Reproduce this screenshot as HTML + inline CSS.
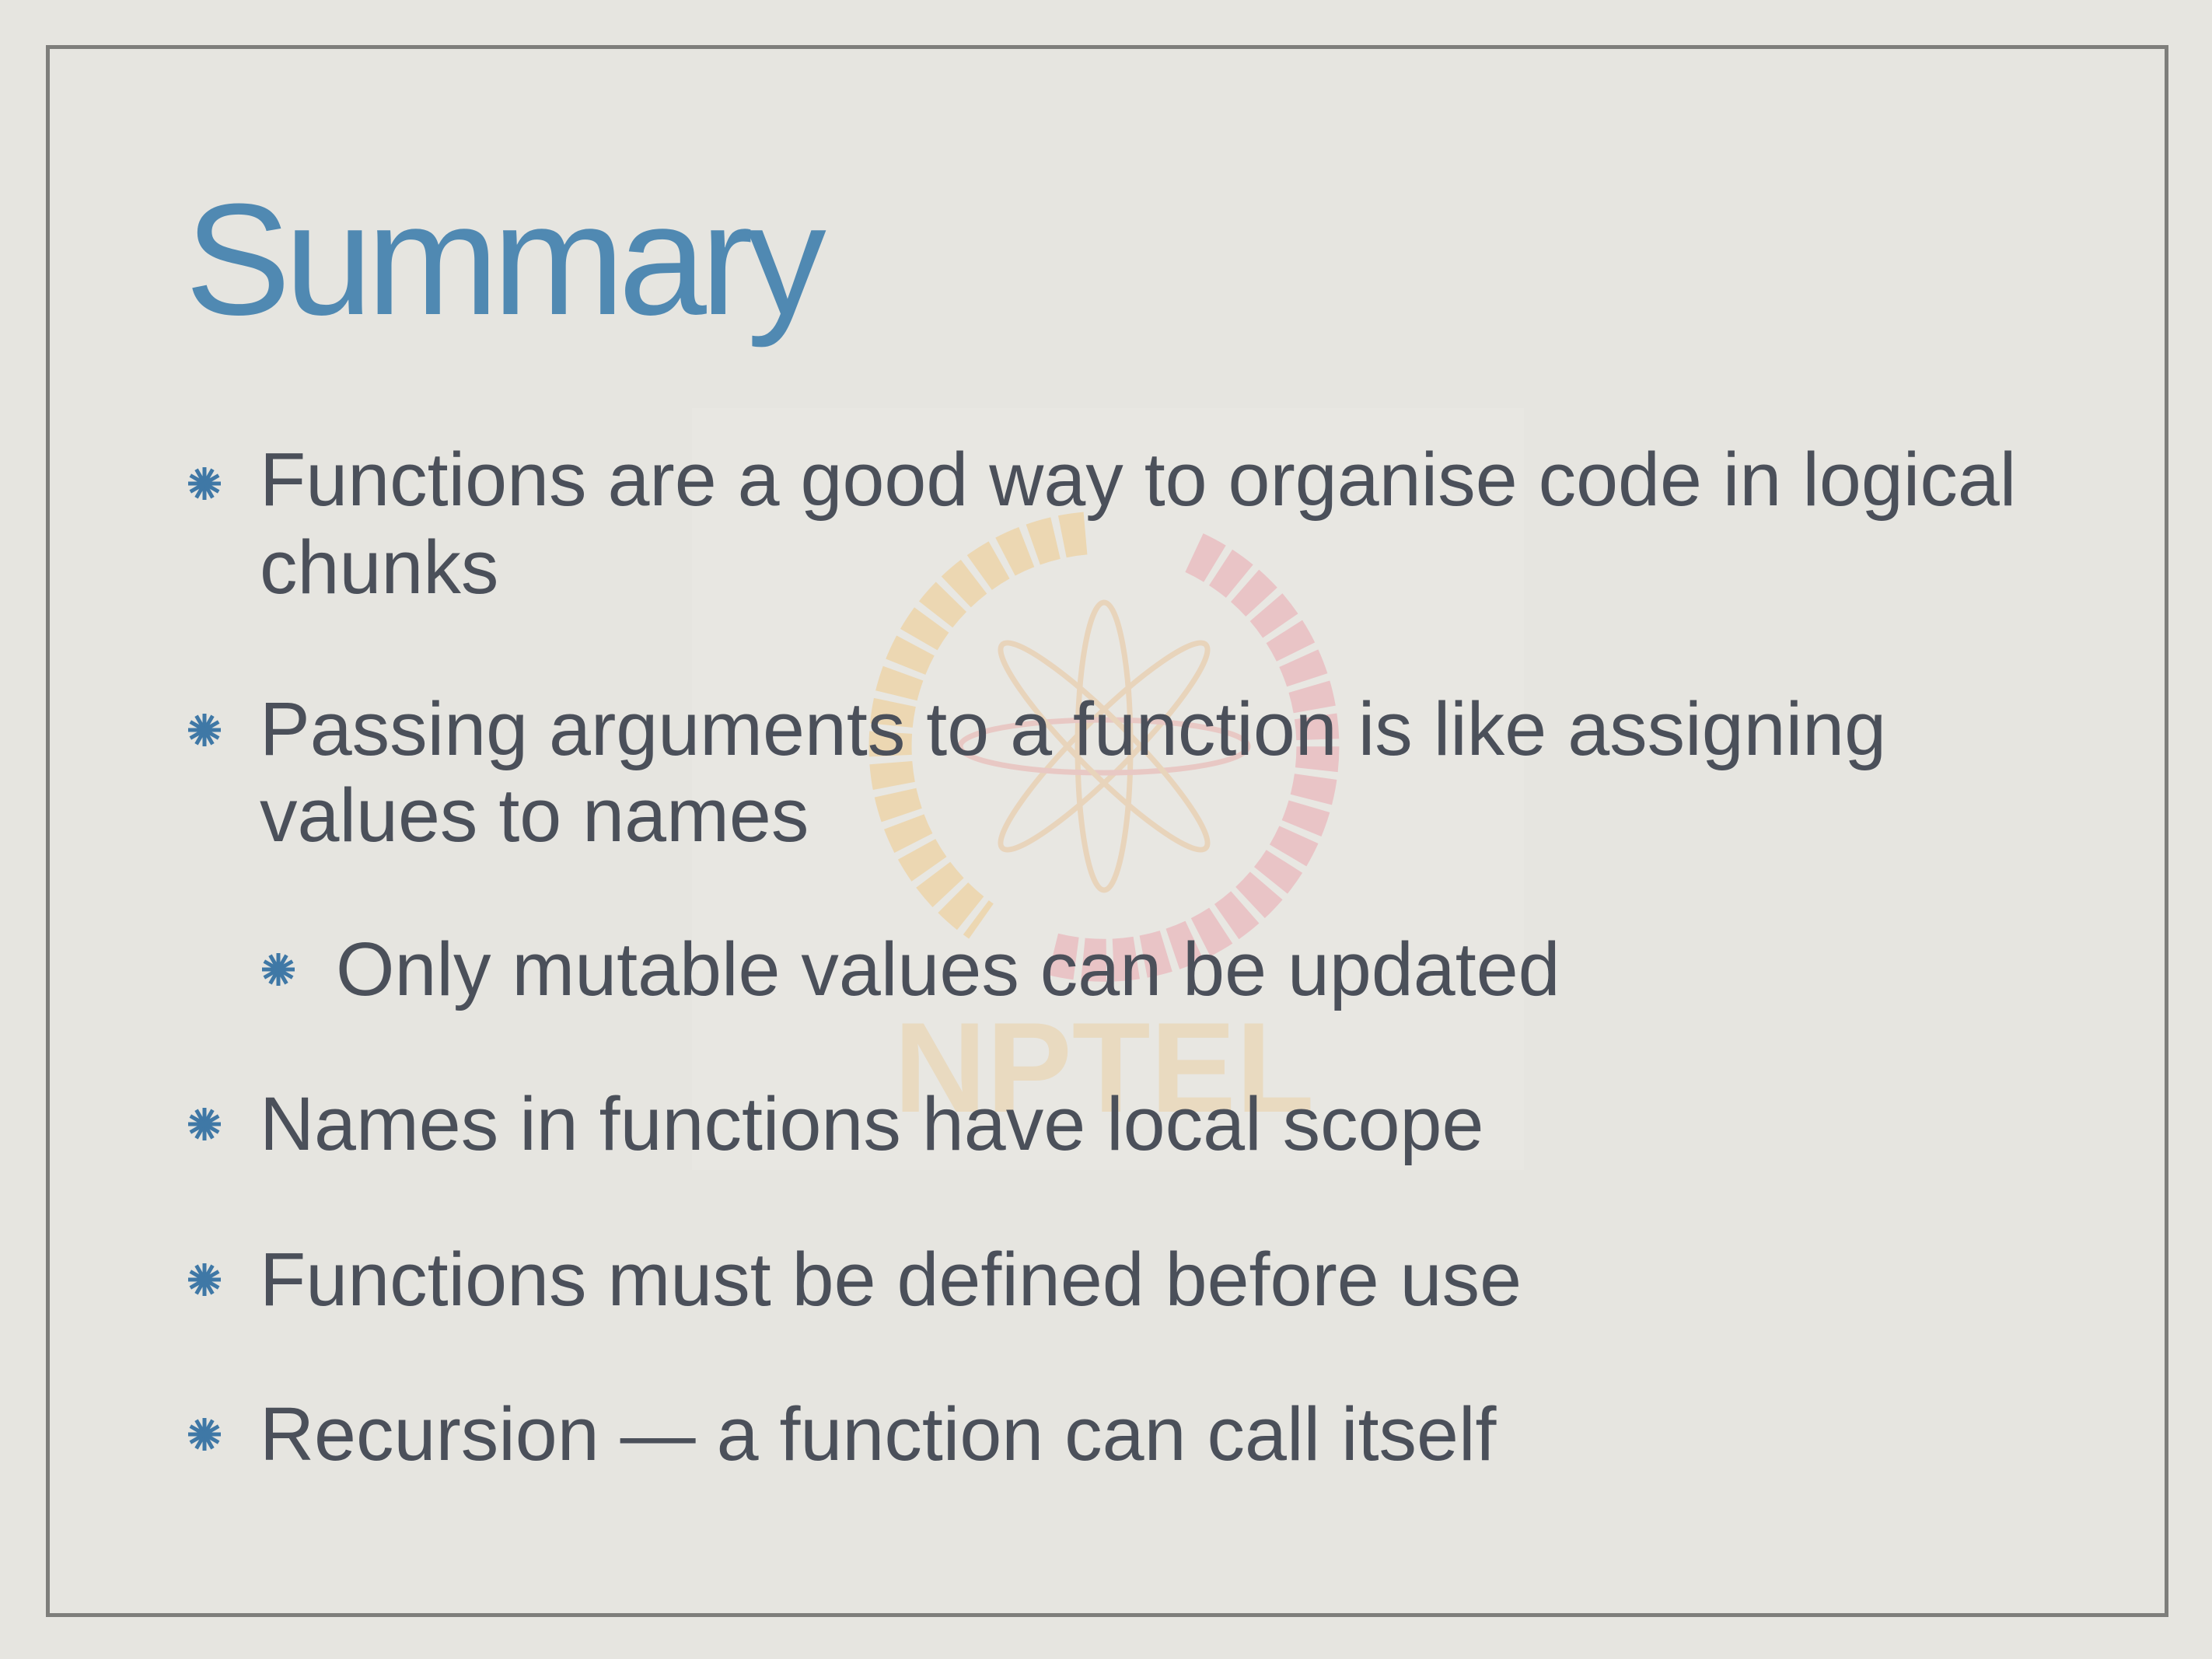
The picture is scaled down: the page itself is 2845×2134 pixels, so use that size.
<!DOCTYPE html>
<html><head><meta charset="utf-8"><style>
html,body{margin:0;padding:0}
body{width:2845px;height:2134px;background:#e6e5e0;position:relative;overflow:hidden;font-family:"Liberation Sans",sans-serif}
.frame{position:absolute;left:59px;top:58px;width:2720px;height:2012px;border:5px solid #7e7e7b}
.t{position:absolute;white-space:nowrap;color:#4b505a;font-size:97px;line-height:1}
.title{position:absolute;left:238px;top:232px;font-size:204px;color:#5089b2;letter-spacing:-8px;line-height:1;white-space:nowrap}
.star{position:absolute;width:44px;height:44px}
.wm{position:absolute;left:890px;top:525px;width:1070px;height:980px;background:rgba(240,239,235,0.2)}
</style></head><body>
<div class="frame"></div>
<div class="title">Summary</div>

<svg style="position:absolute;left:1095px;top:640px" width="650" height="800" viewBox="0 0 650 800">
 <g fill="none" stroke-width="55" stroke-dasharray="30 9">
  <path d="M301 46 A275 275 0 0 0 167 545" stroke="#ebd1a4"/>
  <path d="M441 71 A275 275 0 0 1 254 586" stroke="#e8b9bd"/>
 </g>
 <g fill="none" stroke="#e6cdb0" stroke-width="7" transform="translate(325 320)">
  <ellipse rx="34" ry="185"/>
  <ellipse rx="34" ry="185" transform="rotate(45)"/>
  <ellipse rx="34" ry="185" transform="rotate(90)" stroke="#e6bfbb"/>
  <ellipse rx="34" ry="185" transform="rotate(135)"/>
 </g>
 <text x="325" y="790" text-anchor="middle" font-family="Liberation Sans" font-weight="bold" font-size="165" fill="#e8d5b6">NPTEL</text>
</svg>
<div class="wm"></div>

<svg width="0" height="0" style="position:absolute"><defs><g id="s"><g stroke="#3f78a6" stroke-width="5" stroke-linecap="butt">
<line x1="22" y1="1" x2="22" y2="43"/><line x1="1" y1="22" x2="43" y2="22"/>
<line x1="11.5" y1="3.8" x2="32.5" y2="40.2"/><line x1="32.5" y1="3.8" x2="11.5" y2="40.2"/>
<line x1="3.8" y1="11.5" x2="40.2" y2="32.5"/><line x1="3.8" y1="32.5" x2="40.2" y2="11.5"/>
</g></g></defs></svg>

<svg class="star" style="left:241px;top:600px"><use href="#s"/></svg>
<div class="t" style="left:334px;top:568px">Functions are a good way to organise code in logical</div>
<div class="t" style="left:334px;top:681px">chunks</div>

<svg class="star" style="left:241px;top:917px"><use href="#s"/></svg>
<div class="t" style="left:334px;top:889px">Passing arguments to a function is like assigning</div>
<div class="t" style="left:334px;top:1000px">values to names</div>

<svg class="star" style="left:336px;top:1225px"><use href="#s"/></svg>
<div class="t" style="left:432px;top:1198px">Only mutable values can be updated</div>

<svg class="star" style="left:241px;top:1424px"><use href="#s"/></svg>
<div class="t" style="left:334px;top:1397px">Names in functions have local scope</div>

<svg class="star" style="left:241px;top:1624px"><use href="#s"/></svg>
<div class="t" style="left:334px;top:1597px">Functions must be defined before use</div>

<svg class="star" style="left:241px;top:1823px"><use href="#s"/></svg>
<div class="t" style="left:334px;top:1796px">Recursion — a function can call itself</div>
</body></html>
